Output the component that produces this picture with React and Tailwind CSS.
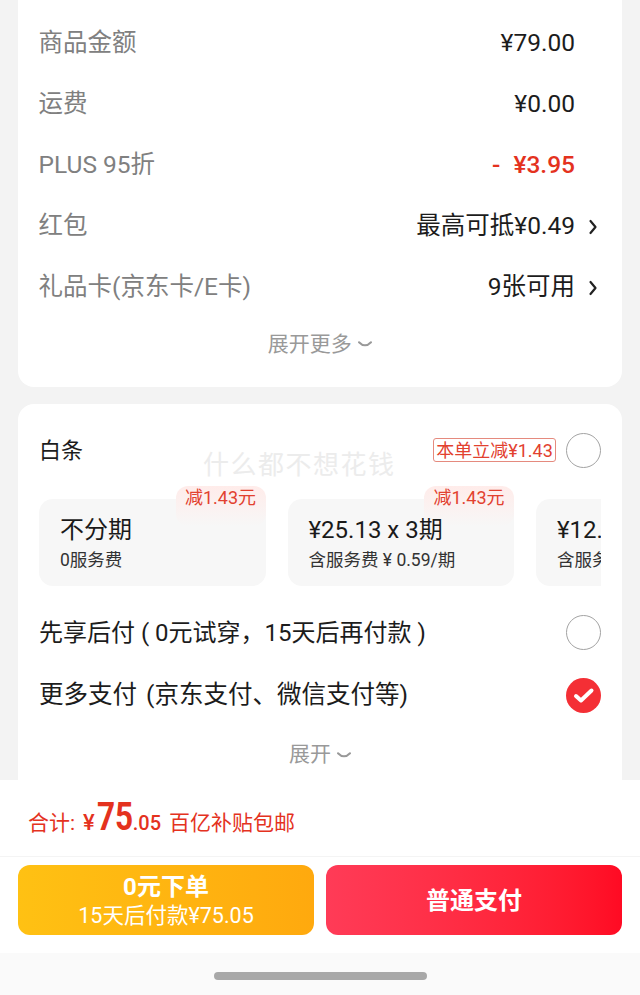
import React from 'react';

const feeRows = [
  { label: '商品金额', value: '¥79.00' },
  { label: '运费', value: '¥0.00' },
  { label: 'PLUS 95折', value: '- ¥3.95', red: true },
  { label: '红包', value: '最高可抵¥0.49', arrow: true },
  { label: '礼品卡(京东卡/E卡)', value: '9张可用', arrow: true },
];

const Chevron = () => (
  <svg width="10" height="16" viewBox="0 0 10 16" fill="none">
    <path d="M2.5 2 L7.5 8 L2.5 14" stroke="#222" strokeWidth="2.2" strokeLinecap="round" strokeLinejoin="round" />
  </svg>
);

const ExpandMark = () => (
  <svg width="14" height="7" viewBox="0 0 14 7" fill="none" className="ml-[6px]">
    <path d="M1 1.2 Q7 7.5 13 1.2" stroke="#999" strokeWidth="2" strokeLinecap="round" />
  </svg>
);

const Radio = () => <div className="h-[35px] w-[35px] shrink-0 rounded-full border-[1.5px] border-[#a3a3a3] bg-white" />;

const RadioChecked = () => (
  <svg width="35" height="35" viewBox="0 0 35 35" className="shrink-0">
    <circle cx="17.5" cy="17.5" r="17.5" fill="#f42f35" />
    <path d="M10 18 L15 22.5 L25.5 12.5" fill="none" stroke="#fff" strokeWidth="4" strokeLinejoin="round" strokeLinecap="round" />
  </svg>
);

const PlanCard = ({ title, sub, tag }) => (
  <div className="relative h-[87px] w-[226.5px] shrink-0 rounded-[14px] bg-[#f7f7f7] pl-[21px] pt-[15px]">
    {tag && (
      <div className="absolute right-0 top-[-13px] flex h-[40px] w-[90px] justify-center rounded-[12px] bg-gradient-to-b from-[#ffecea] to-[#f7f7f7] text-[18px] leading-[24px] text-[#e2412f]">
        {tag}
      </div>
    )}
    <div className="relative whitespace-nowrap text-[24px] leading-[32px] text-[#1a1a1a]">{title}</div>
    <div className="relative mt-[2px] whitespace-nowrap text-[17.5px] leading-[24px] text-[#333]">{sub}</div>
  </div>
);

export default function App() {
  return (
    <div className="flex h-[995px] w-[640px] flex-col overflow-hidden bg-[#f3f3f3] font-['Roboto','Noto_Sans_CJK_SC',sans-serif]">
      <div className="relative h-[780px] shrink-0 overflow-hidden px-[18px]">
        {/* price summary */}
        <div className="h-[387px] rounded-b-[16px] bg-white pl-[20.5px] pr-[21px] pt-[13px]">
          {feeRows.map((row) => (
            <div key={row.label} className="flex h-[61px] items-center justify-between text-[24.5px]">
              <span className="text-[#808080]">{row.label}</span>
              <span className="flex items-center">
                <span className={row.red ? 'font-medium text-[#e4321e] [word-spacing:7px]' : 'text-[#1c1c1c]'}>{row.value}</span>
                <span className="flex w-[26px] justify-end pr-[3px]">{row.arrow && <Chevron />}</span>
              </span>
            </div>
          ))}
          <div className="flex h-[53px] items-center justify-center text-[21px] text-[#999]">
            展开更多
            <ExpandMark />
          </div>
        </div>

        {/* payment methods */}
        <div className="relative mt-[17px] h-[500px] rounded-t-[16px] bg-white px-[21px]">
          <div className="flex h-[92px] items-center justify-between">
            <span className="text-[22px] text-[#1c1c1c]">白条</span>
            <div className="flex items-center gap-[10px]">
              <span className="flex h-[24px] w-[123px] items-center justify-center rounded-[3px] border border-[#e58a7e] text-[18px] text-[#e2412f]">
                本单立减¥1.43
              </span>
              <Radio />
            </div>
          </div>

          <div className="mt-[-10px] flex gap-[22px] overflow-hidden pt-[13px]">
            <PlanCard title="不分期" sub="0服务费" tag="减1.43元" />
            <PlanCard title="¥25.13 x 3期" sub="含服务费 ¥ 0.59/期" tag="减1.43元" />
            <PlanCard title="¥12.89 x 6期" sub="含服务费 ¥ 0.59/期" />
          </div>

          <div className="mt-[15px] flex h-[63px] items-center justify-between">
            <span className="text-[24px] text-[#1c1c1c]">先享后付 ( 0元试穿，15天后再付款 )</span>
            <Radio />
          </div>
          <div className="flex h-[63px] items-center justify-between">
            <span className="text-[24.5px] text-[#1c1c1c] [word-spacing:3px]">更多支付 (京东支付、微信支付等)</span>
            <RadioChecked />
          </div>
          <div className="flex h-[56px] items-center justify-center text-[21px] text-[#999]">
            展开
            <ExpandMark />
          </div>

          {/* watermark */}
          <div className="absolute left-[185px] top-[42px] text-[26px] tracking-[1.5px] text-[#ececec]">什么都不想花钱</div>
        </div>
      </div>

      <div className="flex h-[77px] shrink-0 items-baseline border-b border-[#f4f4f4] bg-white pl-[28px] pt-[18px] text-[#e4321e]">
        <span className="text-[21px]">合计:</span>
        <span className="ml-[8px] text-[22px] font-medium">¥</span>
        <span className="ml-[2px] w-[36px] origin-left scale-x-[0.83] text-[38px] font-bold leading-none">75</span>
        <span className="text-[20px] font-medium">.05</span>
        <span className="ml-[8px] text-[21px]">百亿补贴包邮</span>
      </div>

      <div className="flex h-[96px] shrink-0 gap-[12px] bg-white px-[18px] pt-[8px]">
        <div className="flex h-[70px] flex-1 flex-col items-center justify-center rounded-[12px] bg-gradient-to-r from-[#ffc113] to-[#ffa90e] pt-[2px] text-white">
          <span className="text-[24px] font-bold leading-[30px]">0元下单</span>
          <span className="text-[21.5px] leading-[28px]">15天后付款¥75.05</span>
        </div>
        <div className="flex h-[70px] flex-1 items-center justify-center rounded-[12px] bg-gradient-to-r from-[#ff3b57] to-[#ff0a23] pt-[2px] text-[24px] font-bold text-white">
          普通支付
        </div>
      </div>

      <div className="flex flex-1 justify-center bg-[#fafafa] pt-[19px]">
        <div className="h-[8px] w-[213px] rounded-full bg-[#a8a8a8]" />
      </div>
    </div>
  );
}
